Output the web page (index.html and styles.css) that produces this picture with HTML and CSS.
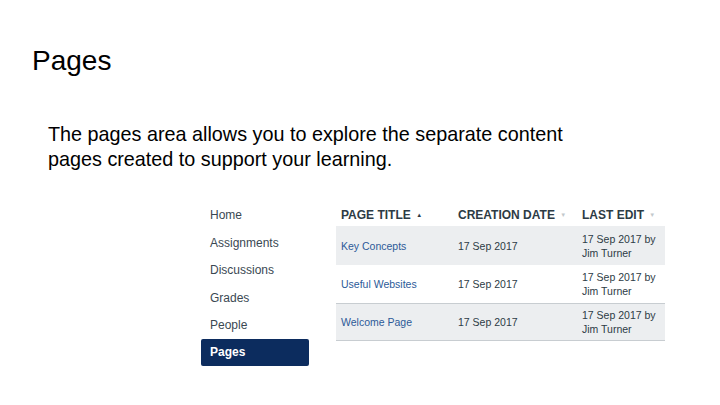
FILE: index.html
```html
<!DOCTYPE html>
<html>
<head>
<meta charset="utf-8">
<link rel="stylesheet" href="styles.css">
</head>
<body>
<h1 class="title">Pages</h1>
<p class="intro">The pages area allows you to explore the separate content pages created to support your learning.</p>
<div class="shot">
  <nav class="sidebar">
    <div class="nav-item">Home</div>
    <div class="nav-item">Assignments</div>
    <div class="nav-item">Discussions</div>
    <div class="nav-item">Grades</div>
    <div class="nav-item">People</div>
    <div class="nav-item active">Pages</div>
  </nav>
  <div class="table">
    <div class="row head">
      <div class="c1">PAGE TITLE <span class="arrow up">&#9650;</span></div>
      <div class="c2">CREATION DATE <span class="arrow">&#9660;</span></div>
      <div class="c3">LAST EDIT <span class="arrow">&#9660;</span></div>
    </div>
    <div class="row shade">
      <div class="c1 link">Key Concepts</div>
      <div class="c2">17 Sep 2017</div>
      <div class="c3">17 Sep 2017 by Jim Turner</div>
    </div>
    <div class="row">
      <div class="c1 link">Useful Websites</div>
      <div class="c2">17 Sep 2017</div>
      <div class="c3">17 Sep 2017 by Jim Turner</div>
    </div>
    <div class="row shade lined">
      <div class="c1 link">Welcome Page</div>
      <div class="c2">17 Sep 2017</div>
      <div class="c3">17 Sep 2017 by Jim Turner</div>
    </div>
  </div>
</div>
</body>
</html>
```
FILE: styles.css
```css
html, body {
  margin: 0;
  padding: 0;
  background: #ffffff;
  font-family: "Liberation Sans", Arial, sans-serif;
}
.title {
  margin: 0;
  padding: 44px 0 0 32px;
  font-size: 28px;
  font-weight: normal;
  line-height: 34px;
  color: #000;
}
.intro {
  margin: 0;
  padding: 44px 0 0 48px;
  width: 530px;
  font-size: 19.8px;
  line-height: 25px;
  color: #000;
}
.shot {
  display: flex;
  margin: 31px 0 0 201px;
  gap: 27px;
}
.sidebar {
  display: flex;
  flex-direction: column;
  width: 108px;
  margin-top: -1px;
}
.nav-item {
  height: 27.5px;
  line-height: 27.5px;
  padding-left: 9px;
  font-size: 12px;
  color: #3a4852;
}
.nav-item.active {
  background: #0c2c5e;
  color: #fff;
  font-weight: bold;
  border-radius: 2px;
  height: 27px;
  line-height: 27px;
  margin-top: -1px;
}
.table {
  width: 329px;
  display: flex;
  flex-direction: column;
}
.row {
  display: flex;
  align-items: center;
  height: 38px;
  font-size: 10.5px;
  color: #2d3b45;
}
.row.head {
  height: 23px;
  font-size: 12px;
  font-weight: bold;
  color: #2d3b45;
}
.row.shade {
  background: #eceef0;
  height: 39px;
}
.row.lined {
  height: 36px;
  border-top: 1px solid #c8cdd1;
  border-bottom: 1px solid #c8cdd1;
}
.c1 { width: 112px; padding-left: 5px; }
.c2 { width: 119px; padding-left: 5px; }
.c3 { width: 80px; padding-left: 5px; line-height: 14px; }
.link { color: #2c5a98; }
.arrow {
  font-size: 6px;
  color: #c2c8cc;
  vertical-align: 2px;
  margin-left: 2px;
}
.arrow.up { color: #2d3b45; }
```
